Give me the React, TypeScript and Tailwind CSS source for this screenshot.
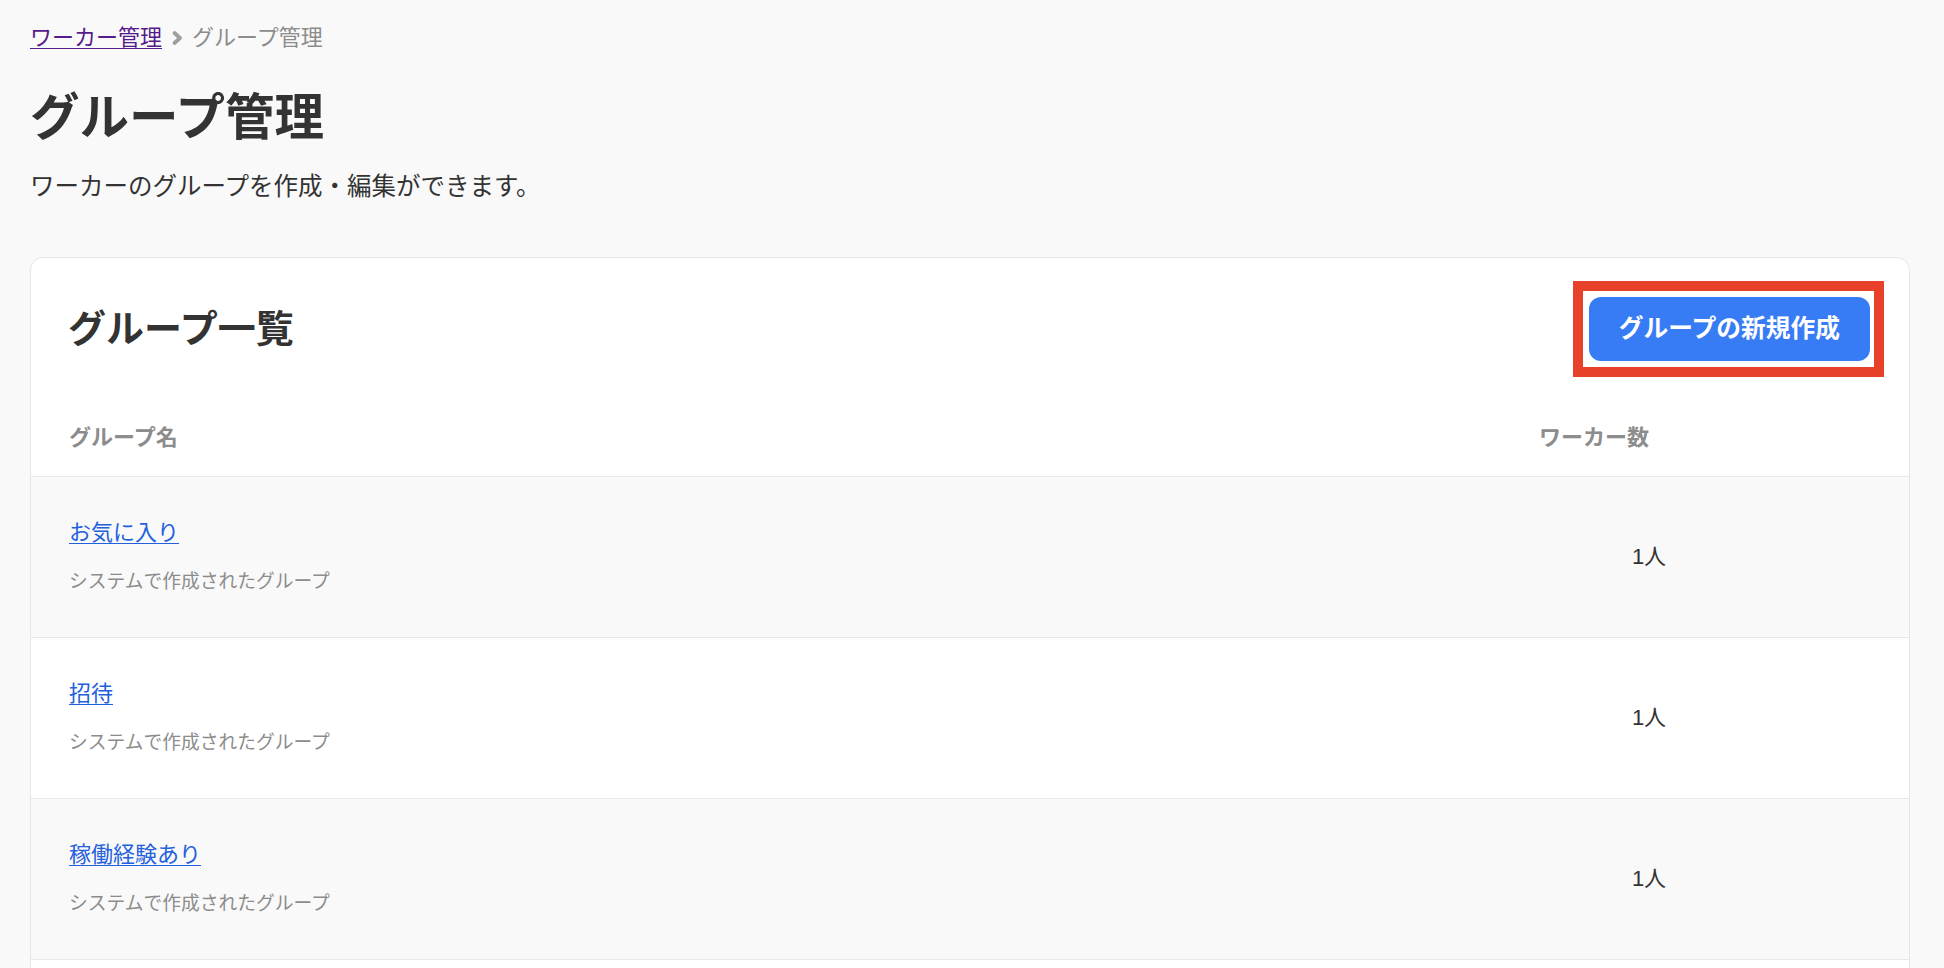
import React from "react";

const rows = [
  { name: "お気に入り", desc: "システムで作成されたグループ", count: "1人" },
  { name: "招待", desc: "システムで作成されたグループ", count: "1人" },
  { name: "稼働経験あり", desc: "システムで作成されたグループ", count: "1人" },
];

export default function App() {
  return (
    <div className="min-h-screen bg-[#f9f9f9] pl-[30px] pr-[34px] pt-[22px] font-['Liberation_Sans','Noto_Sans_CJK_JP',sans-serif] text-[#333333]">
      {/* breadcrumb */}
      <nav className="flex items-center text-[22px] leading-[32px]">
        <a href="#" className="text-[#551a8b] underline decoration-1 underline-offset-[3px]">
          ワーカー管理
        </a>
        <svg className="mx-[8px] h-[16px] w-[14px]" viewBox="0 0 14 16" fill="none">
          <path d="M4.5 3 L10 8 L4.5 13" stroke="#9e9e9e" strokeWidth="3.8" strokeLinecap="round" strokeLinejoin="round" />
        </svg>
        <span className="text-[#8c8c8c]">グループ管理</span>
      </nav>

      {/* title */}
      <h1 className="mt-[34px] text-[49.5px] font-bold leading-[60px] text-[#333333]">グループ管理</h1>
      <p className="mt-[21px] text-[24.5px] leading-[36px] text-[#333333]">
        ワーカーのグループを作成・編集ができます。
      </p>

      {/* card */}
      <div className="mt-[52px] overflow-hidden rounded-[13px] border border-[#e6e6e6] bg-white">
        <div className="flex items-center justify-between py-[39px] pl-[37px] pr-[39px]">
          <h2 className="text-[38px] font-bold leading-[50px] text-[#333333]">グループ一覧</h2>
          <div className="relative">
            <button className="h-[64px] rounded-[12px] bg-[#387cf5] px-[30px] text-[24.75px] font-bold text-white">
              グループの新規作成
            </button>
            <div className="pointer-events-none absolute -bottom-[16px] -left-[16px] -right-[14px] -top-[16px] border-[10px] border-[#e8412a]" />
          </div>
        </div>

        {/* table header */}
        <div className="flex border-b border-[#e8e8e8] pb-[22px] pr-[150px] pt-[22px] text-[22px] font-bold leading-[32px] text-[#8c8c8c]">
          <div className="flex-1 pl-[38px]">グループ名</div>
          <div className="w-[220px]">ワーカー数</div>
        </div>

        {rows.map((r, i) => (
          <div
            key={r.name}
            className={`flex items-center border-b border-[#e8e8e8] pr-[150px] ${i % 2 === 0 ? "bg-[#f9f9f9]" : "bg-white"}`}
          >
            <div className="flex-1 pb-[41px] pl-[38px] pt-[40px]">
              <a href="#" className="text-[22px] leading-[32px] text-[#2360dc] underline decoration-1 underline-offset-[3px]">
                {r.name}
              </a>
              <div className="mt-[19px] text-[18.75px] leading-[28px] text-[#8c8c8c]">{r.desc}</div>
            </div>
            <div className="w-[220px] text-center text-[22px] leading-[32px] text-[#333333]">{r.count}</div>
          </div>
        ))}
        <div className="h-[160px] bg-white" />
      </div>
    </div>
  );
}
